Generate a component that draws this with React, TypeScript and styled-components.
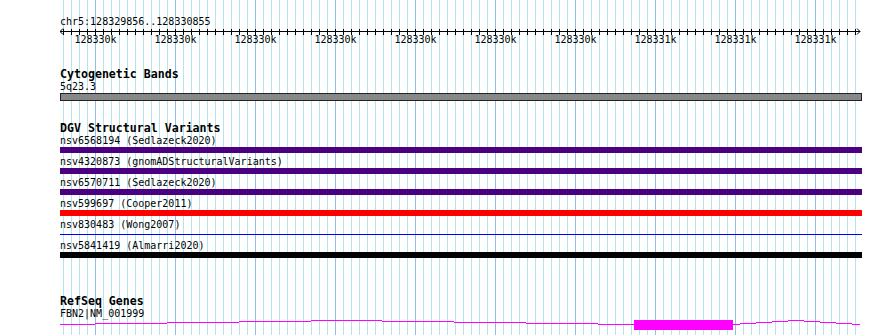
import React from 'react'
import styled, { createGlobalStyle } from 'styled-components'

const GlobalStyle = createGlobalStyle`
    body{
        margin:0;
        background:#fff;
        font-family:"DejaVu Sans Mono", "Liberation Mono", monospace;
        color:#000;
    }
`

const MINOR = 8
const MAJOR = 80
const MINOR_OFFSET = 3
const MAJOR_OFFSET = 35

const tickLabels = [
    '128330k', '128330k', '128330k', '128330k', '128330k', '128330k', '128330k',
    '128331k', '128331k', '128331k',
]

const dgvFeatures = [
    { name: 'nsv6568194 (Sedlazeck2020)', color: '#4b0082' },
    { name: 'nsv4320873 (gnomADStructuralVariants)', color: '#4b0082' },
    { name: 'nsv6570711 (Sedlazeck2020)', color: '#4b0082' },
    { name: 'nsv599697 (Cooper2011)', color: '#ff0000' },
    { name: 'nsv830483 (Wong2007)', color: '#0000ff', thin: true },
    { name: 'nsv5841419 (Almarri2020)', color: '#000000' },
]

// intron line of the gene, drawn as flat steps [x1, x2, y] in local coords
const intronSteps: [number, number, number][] = [
    [0, 35, 4], [35, 107, 3], [107, 179, 2], [179, 251, 1], [251, 322, 0],
    [322, 394, 1], [394, 466, 2], [466, 538, 3], [538, 574, 4],
    [673, 680, 4], [680, 696, 3], [696, 712, 2], [712, 728, 1], [728, 744, 0],
    [744, 760, 1], [760, 776, 2], [776, 792, 3], [792, 800, 4],
]

const Ruler = () => {
    const ticks = []
    for (let x = MINOR_OFFSET; x < 800; x += MINOR) ticks.push(x)
    return (
        <RulerSvg width={802} height={20}>
            <line x1={0} y1={4.5} x2={800} y2={4.5} stroke="#000" />
            <polyline points="3,1.5 0,4.5 3,7.5" fill="none" stroke="#000" />
            <polyline points="797,1.5 800,4.5 797,7.5" fill="none" stroke="#000" />
            {ticks.map(x => (
                <line key={x} x1={x + 0.5} y1={2} x2={x + 0.5} y2={8} stroke="#000" />
            ))}
            {tickLabels.map((t, i) => (
                <text key={i} x={MAJOR_OFFSET + i * MAJOR + 0.5} y={16} textAnchor="middle">{t}</text>
            ))}
        </RulerSvg>
    )
}

const GeneGlyph = () => (
    <GeneSvg width={802} height={12} shapeRendering="crispEdges">
        {intronSteps.map(([a, b, y], i) => (
            <rect key={i} x={a} y={y + 1} width={b - a} height={1} fill="#ff00ff" />
        ))}
        <rect x={574} y={1} width={99} height={10} fill="#ff00ff" />
    </GeneSvg>
)

const App = () => {
    return (
        <>
            <GlobalStyle />
            <Board>
                <RulerTitle>chr5:128329856..128330855</RulerTitle>
                <Ruler />

                <Track $top={21}>
                    <TrackLabel>Cytogenetic Bands</TrackLabel>
                    <FeatureLabel>5q23.3</FeatureLabel>
                    <BandBar />
                </Track>

                <Track $top={21}>
                    <TrackLabel>DGV Structural Variants</TrackLabel>
                    {dgvFeatures.map(f => (
                        <FeatureRow key={f.name}>
                            <FeatureLabel>{f.name}</FeatureLabel>
                            <BarSlot>
                                <Bar $color={f.color} $thin={!!f.thin} />
                            </BarSlot>
                        </FeatureRow>
                    ))}
                </Track>

                <Track $top={34}>
                    <TrackLabel>RefSeq Genes</TrackLabel>
                    <FeatureLabel>FBN2|NM_001999</FeatureLabel>
                    <GeneGlyph />
                </Track>
            </Board>
        </>
    )
}

export default App

const Board = styled.div`
    margin-left:60px;
    width:802px;
    height:335px;
    overflow:hidden;
    display:flex;
    flex-direction:column;
    background-image:
        linear-gradient(to right, #8fbfe6 1px, transparent 1px),
        linear-gradient(to right, #b3e5ea 1px, transparent 1px);
    background-size:${MAJOR}px 100%, ${MINOR}px 100%;
    background-position:${MAJOR_OFFSET}px 0, ${MINOR_OFFSET}px 0;
`

const RulerTitle = styled.div`
    margin-top:16px;
    font-size:10px;
    line-height:11px;
    white-space:nowrap;
`

const RulerSvg = styled.svg`
    display:block;
    overflow:visible;
    text{
        font-family:"DejaVu Sans Mono", monospace;
        font-size:10px;
        fill:#000;
    }
`

const Track = styled.div<{ $top: number }>`
    margin-top:${p => p.$top}px;
    display:flex;
    flex-direction:column;
`

const TrackLabel = styled.div`
    font-size:11.6px;
    font-weight:bold;
    line-height:13px;
    white-space:nowrap;
`

const FeatureLabel = styled.div`
    font-size:10px;
    line-height:11px;
    white-space:nowrap;
`

const FeatureRow = styled.div`
    display:flex;
    flex-direction:column;
    padding-bottom:3px;
`

const BarSlot = styled.div`
    margin-top:1px;
    height:6px;
    display:flex;
    align-items:center;
`

const Bar = styled.div<{ $color: string; $thin: boolean }>`
    width:100%;
    height:${p => (p.$thin ? 1 : 6)}px;
    background:${p => p.$color};
`

const BandBar = styled.div`
    margin-top:1px;
    height:6px;
    background:#888888;
    border:1px solid #222;
`

const GeneSvg = styled.svg`
    display:block;
`
